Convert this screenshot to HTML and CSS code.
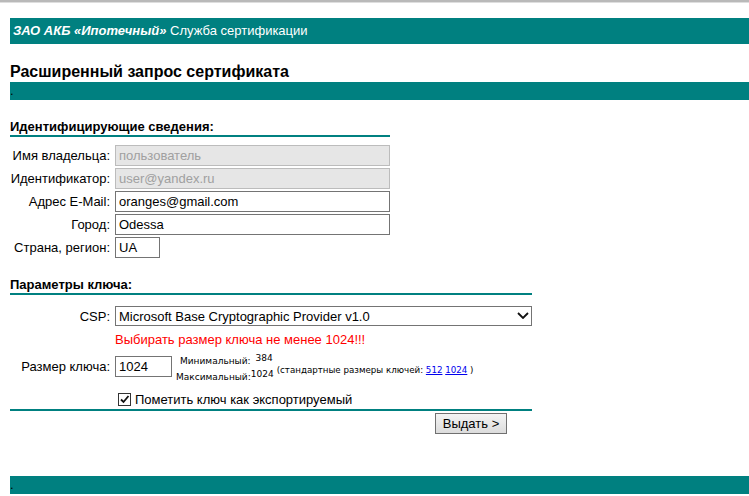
FILE: index.html
```html
<!DOCTYPE html>
<html lang="ru">
<head>
<meta charset="utf-8">
<title>Расширенный запрос сертификата</title>
<link rel="stylesheet" href="styles.css">
</head>
<body>
<div class="chrome"></div>
<div class="page">
  <div class="brand"><b><i>ЗАО АКБ «Ипотечный»</i></b> Служба сертификации</div>
  <h1 class="title">Расширенный запрос сертификата</h1>
  <div class="bar">.</div>

  <form class="form">
    <div class="section ident">
      <h2 class="sec-head">Идентифицирующие сведения:</h2>
      <div class="rows">
        <label class="lbl">Имя владельца:</label>
        <input class="field wide" type="text" value="пользователь" disabled>
        <label class="lbl">Идентификатор:</label>
        <input class="field wide" type="text" value="user@yandex.ru" disabled>
        <label class="lbl">Адрес E-Mail:</label>
        <input class="field wide" type="text" value="oranges@gmail.com">
        <label class="lbl">Город:</label>
        <input class="field wide" type="text" value="Odessa">
        <label class="lbl">Страна, регион:</label>
        <input class="field short" type="text" value="UA">
      </div>
    </div>

    <div class="section keyparams">
      <h2 class="sec-head">Параметры ключа:</h2>
      <div class="rows keyrows">
        <label class="lbl">CSP:</label>
        <div class="select-wrap">
          <select class="select">
            <option>Microsoft Base Cryptographic Provider v1.0</option>
          </select>
          <svg class="chev" width="12" height="7" viewBox="0 0 12 7"><path d="M1 1 L6 6 L11 1" fill="none" stroke="#111" stroke-width="1.8"/></svg>
        </div>
        <span></span>
        <div class="warn">Выбирать размер ключа не менее 1024!!!</div>
        <label class="lbl keylbl">Размер ключа:</label>
        <div class="keysize">
          <input class="field keyin" type="text" value="1024">
          <div class="limits">
            <div class="lim lim-min"><span class="lim-name">Минимальный:</span><span class="lim-val">384</span></div>
            <div class="lim lim-max"><span class="lim-name">Максимальный:</span><span class="lim-val">1024</span></div>
          </div>
          <div class="std">(стандартные размеры ключей: <a href="#">512</a> <a href="#">1024</a> )</div>
        </div>
        <span></span>
        <div class="check">
          <span class="box"><svg width="11" height="11" viewBox="0 0 11 11"><path d="M2 5.5 L4.5 8 L9.5 2" fill="none" stroke="#111" stroke-width="1.8"/></svg></span>
          <span class="check-lbl">Пометить ключ как экспортируемый</span>
        </div>
      </div>
    </div>

    <div class="actions">
      <button type="button" class="btn">Выдать &gt;</button>
    </div>
  </form>

  <div class="bar footer-bar">.</div>
</div>
</body>
</html>
```

FILE: styles.css
```css
html, body {
  margin: 0;
  padding: 0;
  background: #fff;
}
body {
  font-family: "Liberation Sans", Arial, sans-serif;
  color: #000;
  width: 749px;
  height: 496px;
  overflow: hidden;
}
.chrome {
  height: 2px;
  background: #b9b9b9;
  border-bottom: 1px solid #dedede;
}
.page {
  padding-left: 10px;
}
.brand {
  margin-top: 15px;
  height: 26px;
  line-height: 26px;
  background: #008080;
  color: #fff;
  font-size: 13px;
  padding-left: 3px;
}
.title {
  margin: 17px 0 0 0;
  font-size: 16px;
  font-weight: bold;
  line-height: 21px;
  height: 21px;
}
.bar {
  height: 18px;
  background: #008080;
  color: #000;
  font-size: 13px;
  line-height: 18px;
  overflow: hidden;
}
.form {
  margin: 0;
}
.section {
  margin-top: 19px;
}
.ident {
  width: 380px;
}
.keyparams {
  width: 522px;
}
.sec-head {
  margin: 0;
  font-size: 13px;
  font-weight: bold;
  line-height: 16px;
  border-bottom: 2px solid #008080;
}
.rows {
  display: grid;
  grid-template-columns: 100px 1fr;
  column-gap: 5px;
  row-gap: 2px;
  margin-top: 8px;
  align-items: center;
}
.lbl {
  justify-self: end;
  white-space: nowrap;
  font-size: 13px;
}
.field {
  box-sizing: border-box;
  height: 21px;
  margin: 0;
  padding: 0 3px;
  font-family: "Liberation Sans", Arial, sans-serif;
  font-size: 13px;
  color: #000;
  background: #fff;
  border: 1px solid #747474;
  border-radius: 0;
  outline: none;
}
.field:disabled {
  background: #e6e6e6;
  border-color: #bcbcbc;
  color: #a0a0a0;
  -webkit-text-fill-color: #a0a0a0;
  opacity: 1;
}
.wide {
  width: 275px;
}
.short {
  width: 45px;
}
.keyrows {
  margin-top: 11px;
  row-gap: 0;
}
.select-wrap {
  position: relative;
  width: 417px;
  height: 20px;
}
.select {
  -webkit-appearance: none;
  appearance: none;
  box-sizing: border-box;
  width: 100%;
  height: 20px;
  margin: 0;
  padding: 0 3px;
  font-family: "Liberation Sans", Arial, sans-serif;
  font-size: 13px;
  color: #000;
  background: #fff;
  border: 1px solid #747474;
  border-radius: 0;
}
.chev {
  position: absolute;
  right: 3px;
  top: 6px;
  pointer-events: none;
}
.warn {
  color: #ff0000;
  font-size: 13px;
  line-height: 20px;
  margin: 4px 0 6px;
}
.keysize {
  display: flex;
  align-items: center;
  height: 21px;
}
.keyin {
  width: 57px;
}
.limits {
  display: flex;
  flex-direction: column;
  margin-left: 4px;
  margin-top: 8px;
  font-family: "DejaVu Sans", Verdana, sans-serif;
  font-size: 9px;
}
.lim {
  display: flex;
  align-items: flex-start;
  height: 11px;
}
.lim-min {
  padding-left: 4px;
  margin-top: -2px;
}
.lim-max {
  margin-top: 5px;
}
.lim-min .lim-val {
  margin-left: 5px;
  margin-top: -3px;
}
.lim-max .lim-val {
  margin-top: -3px;
}
.std {
  margin-left: 3px;
  font-family: "DejaVu Sans", Verdana, sans-serif;
  font-size: 8.7px;
  margin-top: 7px;
}
.std a {
  color: #0000ee;
}
.check {
  display: flex;
  align-items: center;
  margin-top: 12px;
  padding-left: 3px;
  height: 20px;
}
.box {
  box-sizing: border-box;
  width: 13px;
  height: 13px;
  border: 1px solid #333;
  background: #fff;
  display: flex;
  align-items: center;
  justify-content: center;
}
.check-lbl {
  margin-left: 4px;
  font-size: 13px;
}
.actions {
  width: 522px;
  border-top: 2px solid #008080;
  margin-top: 0;
  padding-top: 2px;
  display: flex;
  justify-content: flex-end;
}
.btn {
  box-sizing: border-box;
  width: 72px;
  height: 21px;
  margin-right: 25px;
  padding: 0;
  font-family: "Liberation Sans", Arial, sans-serif;
  font-size: 13px;
  color: #000;
  background: linear-gradient(#f4f4f4, #dcdcdc);
  border: 1px solid #707070;
  border-radius: 0;
}
.footer-bar {
  margin-top: 42px;
}
```
